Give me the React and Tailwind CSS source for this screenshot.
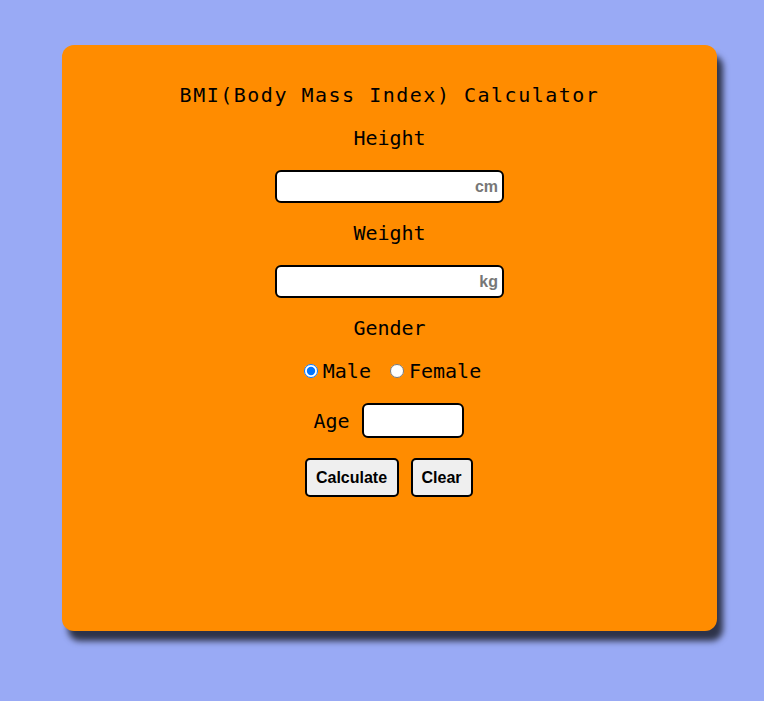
import React from "react";

function UnitInput({ unit }) {
  return (
    <div className="relative w-[229px] h-[33px]">
      <input
        type="text"
        className="w-full h-full bg-white border-2 border-black rounded-[6px] outline-none px-2"
      />
      <span className="absolute right-[6px] top-1/2 -translate-y-1/2 text-[16px] font-bold text-[#777777] [font-family:'Liberation_Sans',Arial,sans-serif] pointer-events-none">
        {unit}
      </span>
    </div>
  );
}

export default function App() {
  return (
    <div className="min-h-[701px] w-full bg-[#99aaf5] pt-[45px] pl-[62px]">
      <div className="w-[655px] h-[586px] bg-[#ff8c00] rounded-[12px] shadow-[6px_10px_6px_rgba(0,0,0,0.7)] flex flex-col items-center pt-[38px] text-black [font-family:'DejaVu_Sans_Mono',monospace] text-[20px] leading-[24px]">
        <div className="tracking-[1.5px]">BMI(Body Mass Index) Calculator</div>
        <div className="mt-[19px]">Height</div>
        <div className="mt-[20px]">
          <UnitInput unit="cm" />
        </div>
        <div className="mt-[18px]">Weight</div>
        <div className="mt-[20px]">
          <UnitInput unit="kg" />
        </div>
        <div className="mt-[18px]">Gender</div>
        <div className="mt-[19px] flex items-center pl-[6px]">
          <input type="radio" name="g" defaultChecked className="m-0 w-[14px] h-[14px]" />
          <span className="ml-[5px]">Male</span>
          <input type="radio" name="g" className="m-0 ml-[19px] w-[14px] h-[14px]" />
          <span className="ml-[5px]">Female</span>
        </div>
        <div className="mt-[20px] flex items-center mr-[2px]">
          <span>Age</span>
          <input
            type="text"
            className="ml-[12px] w-[102px] h-[35px] bg-white border-2 border-black rounded-[6px] outline-none px-2"
          />
        </div>
        <div className="mt-[20px] flex gap-[12px] mr-[2px] [font-family:'Liberation_Sans',Arial,sans-serif]">
          <button className="w-[94px] h-[39px] bg-[#efefef] border-2 border-black rounded-[5px] text-[16px] font-bold leading-none">
            Calculate
          </button>
          <button className="w-[62px] h-[39px] bg-[#efefef] border-2 border-black rounded-[5px] text-[16px] font-bold leading-none">
            Clear
          </button>
        </div>
      </div>
    </div>
  );
}
